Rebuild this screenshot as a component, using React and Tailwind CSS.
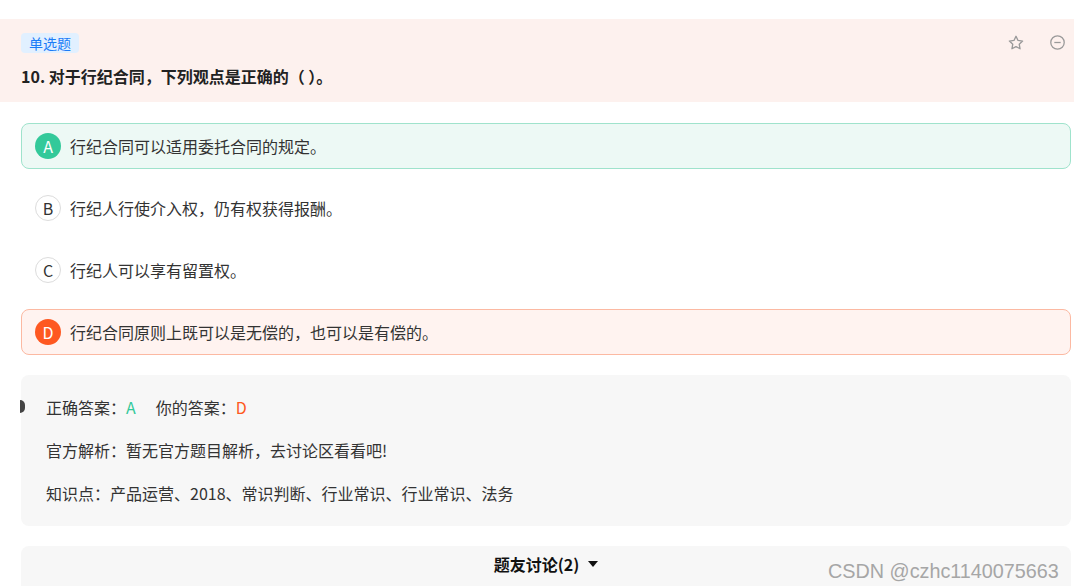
import React from 'react';

const font = { fontFamily: '"Noto Sans CJK SC", "Noto Sans", sans-serif' };

const options = [
  { key: 'A', text: '行纪合同可以适用委托合同的规定。', state: 'right' },
  { key: 'B', text: '行纪人行使介入权，仍有权获得报酬。' },
  { key: 'C', text: '行纪人可以享有留置权。' },
  { key: 'D', text: '行纪合同原则上既可以是无偿的，也可以是有偿的。', state: 'wrong' },
];

function Option({ opt }) {
  let box = 'border border-transparent';
  let dot = 'bg-white border border-[#dcdcdc] text-[#333]';
  if (opt.state === 'right') {
    box = 'border border-[#9fe3cc] bg-[#edf9f5]';
    dot = 'bg-[#33c99a] text-white';
  }
  if (opt.state === 'wrong') {
    box = 'border border-[#fcb9a2] bg-[#fff3f0]';
    dot = 'bg-[#fe5821] text-white';
  }
  return (
    <div className={`h-[46px] rounded-lg flex items-center pl-[13px] ${box}`}>
      <div className={`w-[26px] h-[26px] rounded-full flex items-center justify-center text-[16px] shrink-0 ${dot}`}>
        {opt.key}
      </div>
      <span className="ml-[9px] text-[16px] text-[#333] leading-6">{opt.text}</span>
    </div>
  );
}

export default function App() {
  return (
    <div className="w-[1074px] h-[588px] bg-white overflow-hidden relative" style={font}>
      {/* header */}
      <div className="mt-[19px] h-[83px] bg-[#fdf1ee] pl-[21px] pr-[8px] pt-[14px] flex justify-between">
        <div>
          <div className="w-fit h-[20px] leading-5 px-[8px] rounded bg-[#e1f0ff] text-[#1b7cf7] text-[14px]">单选题</div>
          <div className="mt-[11px] text-[16px] font-bold text-[#222] leading-6">10. 对于行纪合同，下列观点是正确的（&nbsp;）。</div>
        </div>
        <div className="flex items-start gap-[24px] pt-[1px]">
          <svg width="18" height="18" viewBox="0 0 24 24" fill="none" stroke="#999" strokeWidth="1.8" strokeLinejoin="round">
            <path d="M12 3l2.7 5.6 6.1.8-4.5 4.2 1.1 6.1L12 16.8l-5.4 2.9 1.1-6.1-4.5-4.2 6.1-.8z" />
          </svg>
          <svg width="17" height="17" viewBox="0 0 24 24" fill="none" stroke="#999" strokeWidth="1.8">
            <circle cx="12" cy="12" r="9.5" />
            <path d="M7.5 12h9" />
          </svg>
        </div>
      </div>

      {/* options */}
      <div className="ml-[21px] w-[1050px] mt-[21px] flex flex-col gap-4">
        {options.map(o => <Option key={o.key} opt={o} />)}
      </div>

      {/* analysis */}
      <div className="ml-[21px] w-[1050px] mt-[20px] bg-[#f7f7f7] rounded-lg pl-[25px] pt-[20px] pb-[21px] flex flex-col gap-[19px] text-[16px] text-[#333] leading-6 relative">
        <div className="absolute left-[-1px] top-[25px] w-[5px] h-[13px] rounded-r-full bg-[#444]" />
        <div>
          正确答案：<span className="text-[#33c99a]">A</span>
          <span className="ml-[20px]">你的答案：</span><span className="text-[#fe5821]">D</span>
        </div>
        <div>官方解析：暂无官方题目解析，去讨论区看看吧!</div>
        <div>知识点：产品运营、2018、常识判断、行业常识、行业常识、法务</div>
      </div>

      {/* discussion */}
      <div className="ml-[21px] w-[1050px] mt-[20px] h-[40px] bg-[#f7f7f7] rounded-t-lg flex justify-center pt-[7px]">
        <div className="flex items-center h-[22px] gap-[9px] text-[16px] font-bold text-[#111]">
          <span>题友讨论(2)</span>
          <svg width="10" height="7" viewBox="0 0 10 7"><path d="M0 0h10L5 6z" fill="#111" /></svg>
        </div>
      </div>

      <div className="absolute left-[828px] top-[559px] text-[19.8px] text-[#a6a6a6] leading-6" style={{ fontFamily: '"Liberation Sans", Arial, sans-serif' }}>
        CSDN @czhc1140075663
      </div>
    </div>
  );
}
